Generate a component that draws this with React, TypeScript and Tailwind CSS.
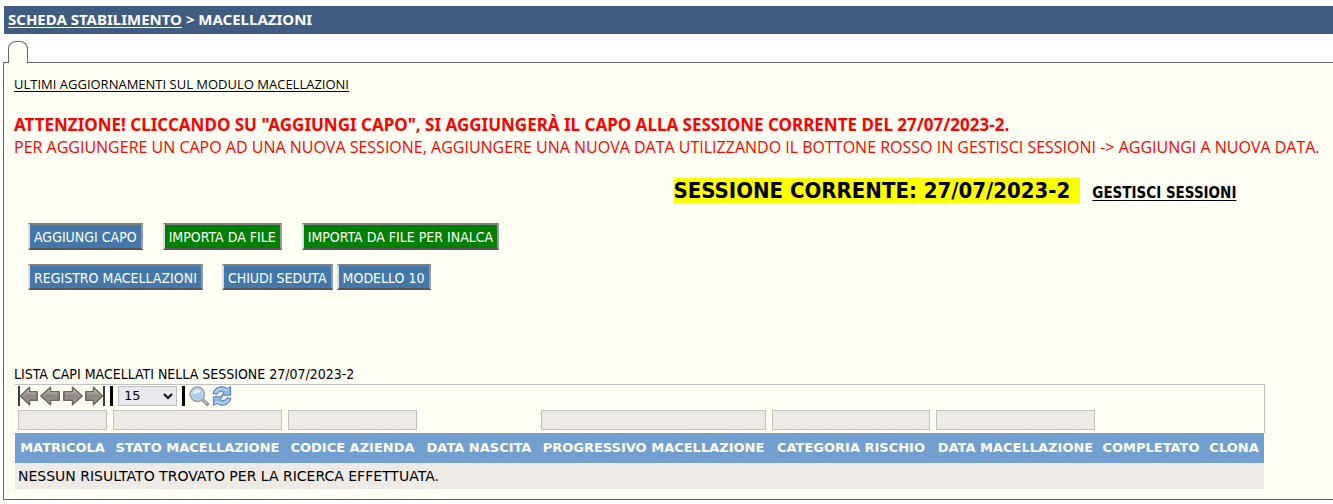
import React from 'react';

const columns = [
  { label: 'MATRICOLA', width: 'w-[95px]', filter: true },
  { label: 'STATO MACELLAZIONE', width: 'w-[175px]', filter: true },
  { label: 'CODICE AZIENDA', width: 'w-[135px]', filter: true },
  { label: 'DATA NASCITA', width: 'w-[118px]', filter: false },
  { label: 'PROGRESSIVO MACELLAZIONE', width: 'w-[231px]', filter: true },
  { label: 'CATEGORIA RISCHIO', width: 'w-[164px]', filter: true },
  { label: 'DATA MACELLAZIONE', width: 'w-[165px]', filter: true },
  { label: 'COMPLETATO', width: 'w-[106px]', filter: false },
  { label: 'CLONA', width: 'w-[60px]', filter: false },
];

function ActionButton({ children, green = false, className = '' }: { children: React.ReactNode; green?: boolean; className?: string }) {
  return (
    <button
      type="button"
      className={`border-2 border-t-[#808080] border-r-[#999999] border-b-[#555555] border-l-[#dddddd] px-1 pt-0.5 font-['DejaVu_Sans_Condensed',sans-serif] text-[14px] whitespace-nowrap text-white ${
        green ? 'bg-[#008000]' : 'bg-[#4477aa]'
      } ${className}`}
    >
      {children}
    </button>
  );
}

function ArrowIcon({ flip = false, bar = false }: { flip?: boolean; bar?: boolean }) {
  return (
    <svg viewBox="0 0 20 20" className={`h-5 w-5 ${flip ? '-scale-x-100' : ''}`} aria-hidden="true">
      <defs>
        <linearGradient id="arrow-fill" x1="0" y1="0" x2="0" y2="1">
          <stop offset="0" stopColor="#b3aca6" />
          <stop offset="0.5" stopColor="#8d8681" />
          <stop offset="1" stopColor="#a9a29c" />
        </linearGradient>
      </defs>
      {bar && <rect x="0" y="0" width="2" height="20" fill="#3d3d3d" />}
      <path
        d={bar ? 'M2.5 10 11.5 1.2V5.8H19.2V14.2H11.5V18.8Z' : 'M0.8 10 10.5 1.2V5.8H19.2V14.2H10.5V18.8Z'}
        fill="url(#arrow-fill)"
        stroke="#6b6560"
        strokeWidth="1.5"
        strokeLinejoin="round"
      />
      <path d={bar ? 'M4.5 10 10.5 4V7H18' : 'M3 10 9.5 4V7H18'} fill="none" stroke="#c4beb8" strokeWidth="0.8" />
    </svg>
  );
}

function SearchIcon() {
  return (
    <svg viewBox="0 0 20 20" className="h-5 w-5" aria-hidden="true">
      <path d="M13.5 13.5 18.3 18" stroke="#858585" strokeWidth="3.4" strokeLinecap="round" />
      <path d="M14 13.6 18 17.4" stroke="#c4c4c4" strokeWidth="1.4" strokeLinecap="round" />
      <circle cx="8.3" cy="8.3" r="7" fill="#a9cdf0" stroke="#9ea5ad" strokeWidth="2" />
      <circle cx="8.3" cy="8.3" r="5.8" fill="none" stroke="#d9e8f7" strokeWidth="0.8" />
      <path d="M3.8 8C4 4.5 8 3 11 4.2C12.5 5 11 6.4 8.7 6.8C6 7.3 5.2 9 3.8 8Z" fill="#e2f0fc" />
    </svg>
  );
}

function RefreshIcon() {
  return (
    <svg viewBox="0 0 20 20" className="h-5 w-5" aria-hidden="true">
      <g fill="#8db9e8" stroke="#4a7ab8" strokeWidth="1" strokeLinejoin="round">
        <path d="M1 7.6C2.6.8 10.6-1 15.2 2.6L18.6.6V9.2H9.4L12 6.6C9.4 4.8 6.6 5.4 5.2 8.2Z" />
        <path d="M19 12.4C17.4 19.2 9.4 21 4.8 17.4L1.4 19.4V10.8H10.6L8 13.4C10.6 15.2 13.4 14.6 14.8 11.8Z" />
      </g>
      <path d="M3 6.6C5.4 2.2 11 1.6 14.8 4.4L17 3M17 13.4C14.6 17.8 9 18.4 5.2 15.6L3 17" fill="none" stroke="#d6e8fb" strokeWidth="1" />
    </svg>
  );
}

export default function App() {
  return (
    <div className="bg-white pt-1.5 font-['Open_Sans',sans-serif] text-black">
      <nav className="ml-1 flex h-7 items-center bg-[#405c81] px-1 pb-0.5 font-['Noto_Sans',sans-serif] text-[15px] font-bold whitespace-pre text-white">
        <a href="#scheda" className="underline underline-offset-2">SCHEDA STABILIMENTO</a>
        <span> &gt; MACELLAZIONI</span>
      </nav>

      <div className="mt-[7px] ml-2 h-[22px] w-5 rounded-t-lg border border-b-0 border-[#666666] bg-[#fffff3]" />
      <main className="-mt-px ml-[3px] border border-r-0 border-[#666666] bg-[#fffff3] pt-3 pb-[10px] pl-[10px]">
        <div className="relative -top-[14px] -mb-[3px] ml-[-5px] h-[3px] w-[18px] bg-[#fffff3]" />
        <a href="#aggiornamenti" className="block w-fit text-[13px] leading-[18px] underline underline-offset-2">
          ULTIMI AGGIORNAMENTI SUL MODULO MACELLAZIONI
        </a>

        <div className="mt-[21px] text-[16px] leading-[22px] whitespace-nowrap text-[#ff0000]">
          <p className="font-['Noto_Sans',sans-serif] text-[17px] font-bold">
            ATTENZIONE! CLICCANDO SU "AGGIUNGI CAPO", SI AGGIUNGERÀ IL CAPO ALLA SESSIONE CORRENTE DEL 27/07/2023-2.
          </p>
          <p>
            PER AGGIUNGERE UN CAPO AD UNA NUOVA SESSIONE, AGGIUNGERE UNA NUOVA DATA UTILIZZANDO IL BOTTONE ROSSO IN
            GESTISCI SESSIONI -&gt; AGGIUNGI A NUOVA DATA.
          </p>
        </div>

        <div className="mt-5 flex items-baseline gap-3 pl-[50%] font-['DejaVu_Sans_Condensed',sans-serif] font-bold whitespace-nowrap">
          <span className="bg-[#ffff00] pr-2.5 text-[22px] leading-[25px]">SESSIONE CORRENTE: 27/07/2023-2</span>
          <a href="#sessioni" className="text-[15px] leading-5 underline underline-offset-2">GESTISCI SESSIONI</a>
        </div>

        <div className="mt-5 ml-[14px] flex gap-5">
          <ActionButton className="h-[27px]">AGGIUNGI CAPO</ActionButton>
          <ActionButton green className="h-[27px]">IMPORTA DA FILE</ActionButton>
          <ActionButton green className="h-[27px]">IMPORTA DA FILE PER INALCA</ActionButton>
        </div>
        <div className="mt-[14px] ml-[14px] flex gap-1">
          <ActionButton className="mr-[15px] h-[26px]">REGISTRO MACELLAZIONI</ActionButton>
          <ActionButton className="h-[26px]">CHIUDI SEDUTA</ActionButton>
          <ActionButton className="h-[26px]">MODELLO 10</ActionButton>
        </div>

        <h2 className="mt-[75px] font-['DejaVu_Sans_Condensed',sans-serif] text-[14px] leading-[19px]">
          LISTA CAPI MACELLATI NELLA SESSIONE 27/07/2023-2
        </h2>

        <table className="ml-px w-[94.7%] table-fixed border-collapse font-['DejaVu_Sans',sans-serif]">
          <colgroup>
            {columns.map((c) => (
              <col key={c.label} className={c.width} />
            ))}
          </colgroup>
          <thead>
            <tr>
              <td colSpan={9} className="border-t border-r border-[#c0c0c0] p-0 pl-[3px]">
                <div className="flex h-[21px] items-center">
                  <div className="flex gap-[2px]">
                    <button type="button" aria-label="Prima pagina"><ArrowIcon bar /></button>
                    <button type="button" aria-label="Pagina precedente"><ArrowIcon /></button>
                    <button type="button" aria-label="Pagina successiva" className="ml-px"><ArrowIcon flip /></button>
                    <button type="button" aria-label="Ultima pagina"><ArrowIcon flip bar /></button>
                  </div>
                  <span className="mx-[5px] h-5 w-[3px] bg-black" />
                  <select
                    aria-label="Righe per pagina"
                    defaultValue="15"
                    className="h-5 w-[59px] border border-[#c0c0c0] bg-[#e9e9ed] px-px text-[13px]"
                  >
                    <option>15</option>
                    <option>50</option>
                    <option>100</option>
                  </select>
                  <span className="mr-1 ml-[5px] h-5 w-[3px] bg-black" />
                  <div className="flex gap-[3px]">
                    <button type="button" aria-label="Cerca"><SearchIcon /></button>
                    <button type="button" aria-label="Aggiorna"><RefreshIcon /></button>
                  </div>
                </div>
              </td>
            </tr>
            <tr>
              {columns.map((c) => (
                <td key={c.label} className="h-[27px] px-[3px] py-0 last:border-r last:border-[#c0c0c0]">
                  {c.filter && (
                    <input
                      type="text"
                      aria-label={c.label}
                      className="block h-5 w-full border border-[#c0c0c0] bg-[#eeebe7] px-1 text-[13px]"
                    />
                  )}
                </td>
              ))}
            </tr>
            <tr className="h-[30px] bg-[#729fcf] text-[13px] text-white">
              {columns.map((c) => (
                <th key={c.label} className="p-0 text-center font-bold whitespace-nowrap">{c.label}</th>
              ))}
            </tr>
          </thead>
          <tbody>
            <tr className="h-[26px] bg-[#eeebe7]">
              <td colSpan={9} className="p-0 pl-[3px] text-[14px] leading-5">NESSUN RISULTATO TROVATO PER LA RICERCA EFFETTUATA.</td>
            </tr>
          </tbody>
        </table>
      </main>
    </div>
  );
}
